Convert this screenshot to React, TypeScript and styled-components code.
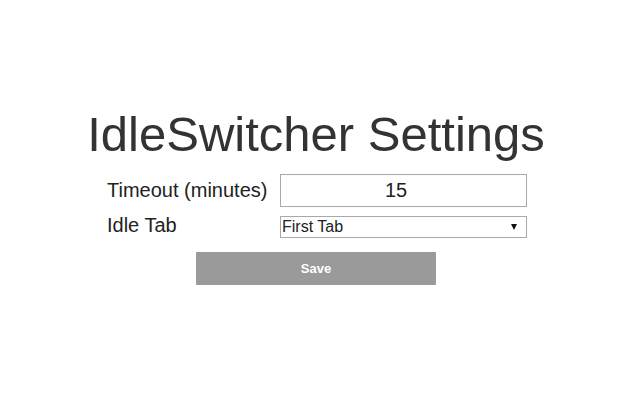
import React from "react";
import styled, { createGlobalStyle } from "styled-components";

const GlobalStyle = createGlobalStyle`
  html, body {
    margin: 0;
    padding: 0;
    background: #ffffff;
  }
  body {
    font-family: "Liberation Sans", Arial, sans-serif;
  }
`;

const Page = styled.div`
  width: 632px;
  padding-right: 8px;
  padding-top: 106px;
  display: flex;
  flex-direction: column;
  align-items: center;
`;

const Title = styled.h1`
  margin: 0;
  font-size: 49px;
  line-height: 56px;
  font-weight: normal;
  color: #333333;
  white-space: nowrap;
`;

const Form = styled.form`
  margin-top: 12px;
  width: 422px;
  display: flex;
  flex-direction: column;
  align-items: center;
`;

const Fields = styled.div`
  width: 100%;
  display: grid;
  grid-template-columns: 175px 247px;
  align-items: baseline;
  row-gap: 7px;
`;

const Label = styled.label`
  padding-left: 2px;
  font-size: 20px;
  line-height: 23px;
  color: #222222;
`;

const NumberInput = styled.input`
  box-sizing: border-box;
  width: 247px;
  height: 33px;
  margin: 0;
  padding: 0 19px 0 4px;
  border: 1px solid #a9a9a9;
  border-radius: 0;
  background: #ffffff;
  font-family: "Liberation Sans", Arial, sans-serif;
  font-size: 20px;
  line-height: 23px;
  color: #222222;
  text-align: center;
  outline: none;
`;

const SelectWrap = styled.div`
  position: relative;
  display: inline-flex;
  width: 247px;
`;

const Select = styled.select`
  appearance: none;
  -webkit-appearance: none;
  box-sizing: border-box;
  width: 247px;
  height: 22px;
  margin: 0;
  padding: 0 20px 0 1px;
  border: 1px solid #a9a9a9;
  border-radius: 0;
  background: #ffffff;
  font-family: "Liberation Sans", Arial, sans-serif;
  font-size: 16px;
  color: #222222;
  outline: none;
`;

const Arrow = styled.span`
  position: absolute;
  right: 10px;
  top: 8px;
  width: 0;
  height: 0;
  border-left: 3.5px solid transparent;
  border-right: 3.5px solid transparent;
  border-top: 6px solid #111111;
  pointer-events: none;
`;

const SaveButton = styled.button`
  margin-top: 14px;
  width: 240px;
  height: 33px;
  border: none;
  border-radius: 1px;
  background: #9a9a9a;
  color: #ffffff;
  font-family: "Liberation Sans", Arial, sans-serif;
  font-size: 13px;
  font-weight: bold;
  cursor: pointer;
`;

export default function App() {
  return (
    <>
      <GlobalStyle />
      <Page>
        <Title>IdleSwitcher Settings</Title>
        <Form onSubmit={(e) => e.preventDefault()}>
          <Fields>
            <Label htmlFor="timeout">Timeout (minutes)</Label>
            <NumberInput id="timeout" type="text" defaultValue="15" />
            <Label htmlFor="idletab">Idle Tab</Label>
            <SelectWrap>
              <Select id="idletab" defaultValue="first">
                <option value="first">First Tab</option>
                <option value="last">Last Tab</option>
              </Select>
              <Arrow />
            </SelectWrap>
          </Fields>
          <SaveButton type="submit">Save</SaveButton>
        </Form>
      </Page>
    </>
  );
}
